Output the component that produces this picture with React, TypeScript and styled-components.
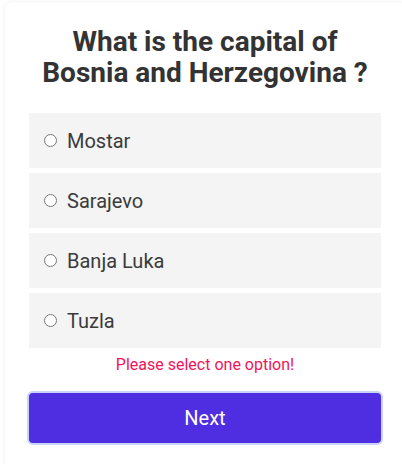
import React, { useState } from "react";
import styled, { createGlobalStyle } from "styled-components";

const Global = createGlobalStyle`
  html, body { margin: 0; padding: 0; background: #ffffff; }
  body { font-family: Roboto, "Liberation Sans", Arial, sans-serif; }
  * { box-sizing: border-box; }
`;

const Card = styled.div`
  margin: 2px 0 0 5px;
  width: 400px;
  min-height: 480px;
  background: #fff;
  border-radius: 6px;
  box-shadow: 0 0 4px rgba(0, 0, 0, 0.08);
  padding: 24px 24px 20px 24px;
  display: flex;
  flex-direction: column;
  align-items: stretch;
`;

const Title = styled.h1`
  margin: 0 0 25px 0;
  font-size: 28px;
  line-height: 31px;
  font-weight: 700;
  color: #333333;
  text-align: center;
`;

const Options = styled.div`
  display: flex;
  flex-direction: column;
  gap: 5px;
`;

const Option = styled.label`
  display: flex;
  align-items: center;
  height: 55px;
  background: #f4f4f4;
  padding-left: 15px;
  cursor: pointer;
  font-size: 20px;
  color: #3b3b3b;
`;

const Radio = styled.input`
  margin: 0 10px 0 0;
  width: 13px;
  height: 13px;
`;

const ErrorText = styled.p`
  margin: 7px 0 0 0;
  text-align: center;
  font-size: 16px;
  line-height: 19px;
  color: #f0145a;
`;

const NextButton = styled.button`
  margin-top: 19px;
  height: 50px;
  width: 100%;
  border: none;
  border-radius: 4px;
  background: #4f2de0;
  color: #ffffff;
  font-family: inherit;
  font-size: 20px;
  box-shadow: 0 0 0 2px #c9d3f8;
  cursor: pointer;
`;

const options = ["Mostar", "Sarajevo", "Banja Luka", "Tuzla"];

export default function App() {
  const [sel, setSel] = useState<string | null>(null);
  return (
    <>
      <Global />
      <Card>
        <Title>
          What is the capital of
          <br />
          Bosnia and Herzegovina ?
        </Title>
        <Options>
          {options.map((o) => (
            <Option key={o}>
              <Radio
                type="radio"
                name="capital"
                checked={sel === o}
                onChange={() => setSel(o)}
              />
              {o}
            </Option>
          ))}
        </Options>
        <ErrorText>Please select one option!</ErrorText>
        <NextButton>Next</NextButton>
      </Card>
    </>
  );
}
